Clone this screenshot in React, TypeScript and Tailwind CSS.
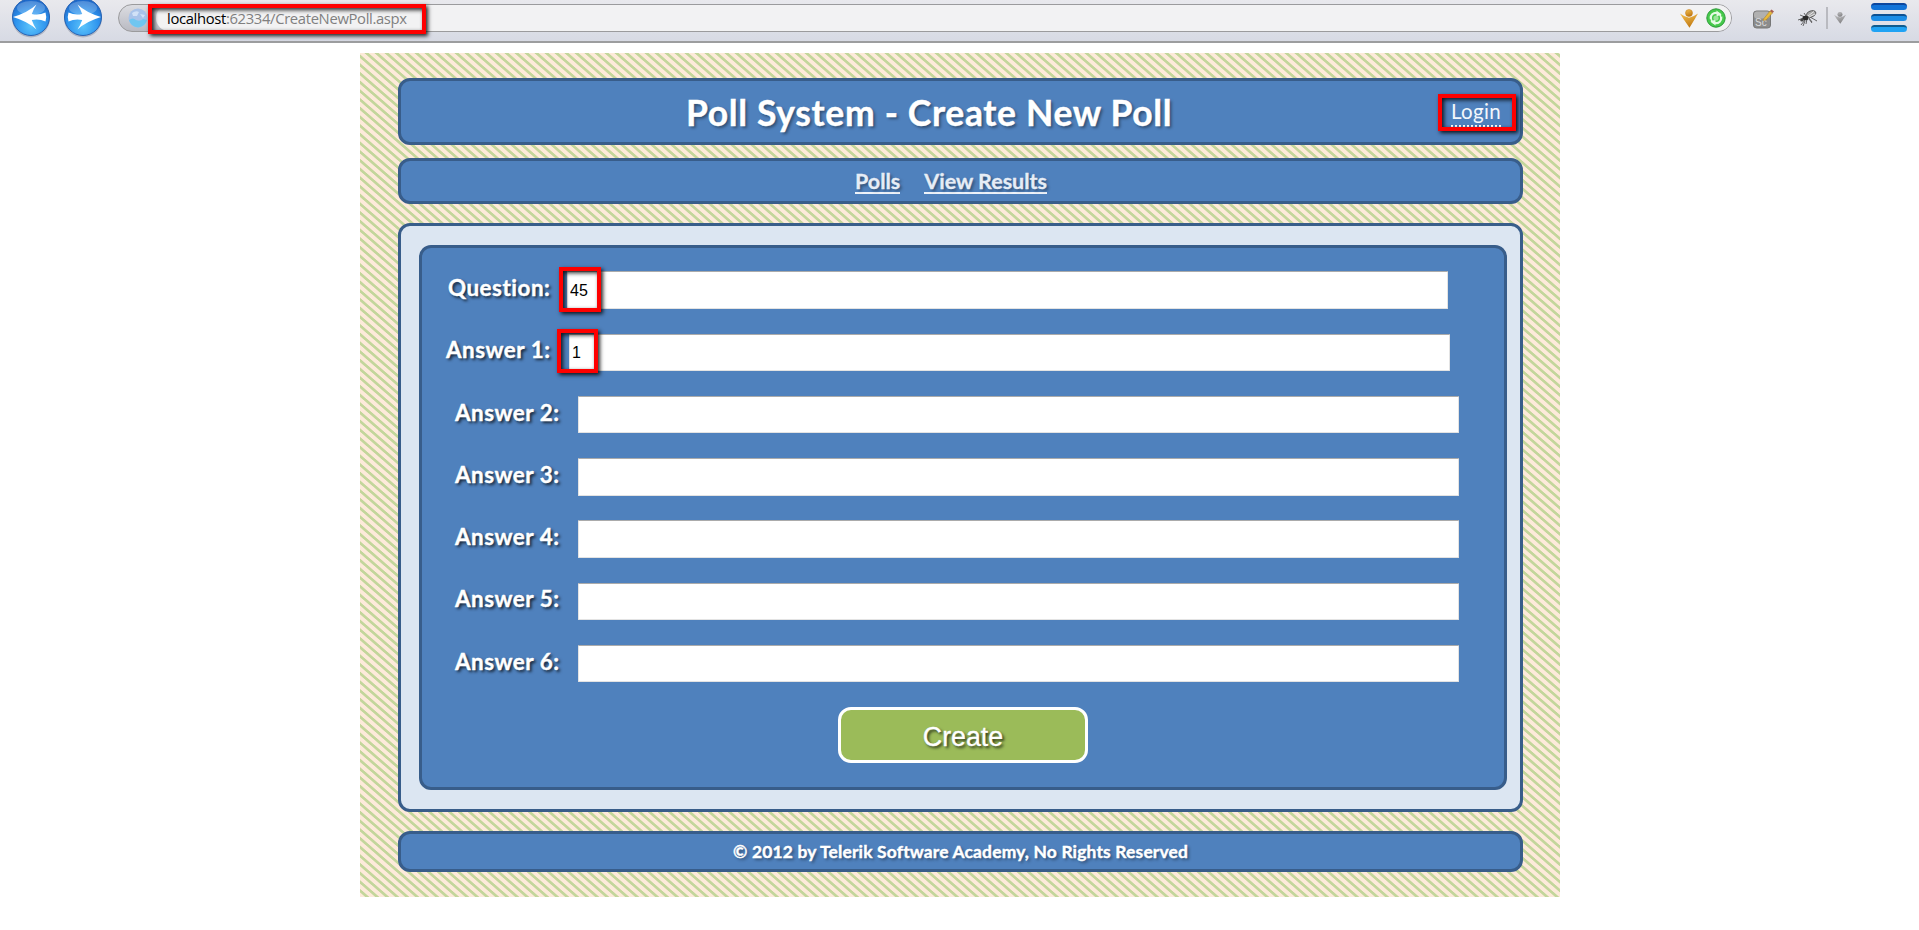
import React from "react";

const panel = "rounded-[12px] border-[3px] border-[#385d8a] bg-[#4f81bd]";
const heading = "font-['Lato',sans-serif] font-bold text-white whitespace-nowrap [-webkit-text-stroke:0.4px_currentColor]";

function Highlight({ className }: { className: string }) {
  return (
    <div
      className={`pointer-events-none absolute border-4 border-[#fe0000] shadow-[2px_2px_4px_rgba(0,0,0,0.85),inset_2px_2px_4px_rgba(0,0,0,0.85)] ${className}`}
    />
  );
}

function ArrowButton({ id, flip }: { id: string; flip?: boolean }) {
  return (
    <svg width="40" height="42" viewBox="0 0 40 42" className={flip ? "-scale-x-100" : ""}>
      <defs>
        <radialGradient id={id} cx="0.5" cy="0.75" r="0.75">
          <stop offset="0" stopColor="#5cc4fb" />
          <stop offset="0.55" stopColor="#2f95ee" />
          <stop offset="1" stopColor="#1b62c4" />
        </radialGradient>
      </defs>
      <circle cx="20" cy="18.5" r="19" fill="#8a93a5" opacity="0.55" />
      <circle cx="20" cy="17" r="18.5" fill={`url(#${id})`} stroke="#2663b4" />
      <ellipse cx="20" cy="8" rx="14" ry="7" fill="#fff" opacity="0.22" />
      <path d="M2 17 Q17 12.500 25.500 4.500 Q22.500 9 20.800 14 Q28 15.500 34.500 12.500 Q36 17 34.500 21.500 Q28 18.500 20.800 20 Q22.500 25 25.500 29.500 Q17 21.500 2 17Z" fill="#fff" />
    </svg>
  );
}

function Figure({ id, from, to, width, height }: { id: string; from: string; to: string; width: number; height: number }) {
  return (
    <svg width={width} height={height} viewBox="0 0 18 19" preserveAspectRatio="none">
      <defs>
        <linearGradient id={id} x1="0" y1="0" x2="0.4" y2="1">
          <stop offset="0" stopColor={from} />
          <stop offset="1" stopColor={to} />
        </linearGradient>
      </defs>
      <path d="M0 4.500 Q4.500 7.800 9 8.800 Q13.500 7.800 18 4.500 L14.500 10.500 L9.500 18.800 L3.800 10.500Z" fill={`url(#${id})`} />
      <circle cx="9" cy="4" r="3.500" fill={`url(#${id})`} stroke={to} strokeWidth="0.500" />
    </svg>
  );
}

function Toolbar() {
  return (
    <div className="relative flex h-[43px] items-start border-b-2 border-[#9c9d9f] bg-linear-to-b from-[#e9e9ed] to-[#d7dae4]">
      <div className="ml-[11px] flex gap-3">
        <ArrowButton id="back" />
        <ArrowButton id="forward" flip />
      </div>
      <div className="mt-1 ml-[15px] flex h-7 w-[1614px] items-center overflow-hidden rounded-full border border-[#9b9b9d] bg-linear-to-b from-[#dcdde2] to-[#b9bac2]">
        <svg width="20" height="20" viewBox="0 0 20 20" className="ml-[9px] shrink-0">
          <circle cx="10" cy="10" r="9.500" fill="#a9c3ea" />
          <path d="M1 12 Q5 9 8 12 Q12 14 15 11 L19 12 Q17 19 10 19.500 Q3 19 1 12Z" fill="#6fc6f0" />
          <path d="M4 5 Q8 2 11 4 L9 8 L5 8Z M12 6 L17 7 L15 10Z" fill="#dbe8fa" opacity="0.8" />
        </svg>
        <div className="ml-2 flex h-full flex-1 items-center rounded-l-[14px] bg-[#f2f2f3] pr-[5px] pl-[11px]">
          <span className="text-[14.800px] leading-5 whitespace-nowrap text-[#808080] font-['Open_Sans',sans-serif] tracking-[-0.340px]">
            <span className="text-black">localhost</span>:62334/CreateNewPoll.aspx
          </span>
          <div className="ml-auto flex items-center gap-[8px]">
            <Figure id="gold" from="#f7c453" to="#c17a14" width={18} height={19} />
            <svg width="20" height="20" viewBox="0 0 20 20">
              <circle cx="10" cy="10" r="9.200" fill="#46c94b" stroke="#2c9a38" strokeWidth="1" />
              <circle cx="10" cy="10" r="5.200" fill="none" stroke="#e6fbe4" strokeWidth="2.300" />
              <path d="M10.500 2.500 L15.500 6.500 L10.500 8.500Z M9.500 17.500 L4.500 13.500 L9.500 11.500Z" fill="#e6fbe4" />
              <path d="M15.500 8.500 L17 5.500 M4.500 11.500 L3 14.500" stroke="#46c94b" strokeWidth="1.400" />
              <circle cx="10" cy="10" r="2.600" fill="#9be59a" />
            </svg>
          </div>
        </div>
      </div>
      <svg width="22" height="20" viewBox="0 0 22 20" className="mt-[9px] ml-[20px]">
        <rect x="1.500" y="2" width="17" height="17" rx="3" fill="#8c8c8c" stroke="#777" />
        <rect x="2" y="2.500" width="16" height="7" rx="3" fill="#b0b0b0" />
        <text x="3" y="17" fontSize="10" fontFamily="Liberation Sans" fill="#dcdcdc">Sc</text>
        <path d="M11.500 10 L18 2 L20.500 4 L14 11 L11 11.500Z" fill="#e8b93c" stroke="#a37821" strokeWidth="0.500" />
        <path d="M18 2 L19.500 0.500 L22 2.500 L20.500 4Z" fill="#a85f4f" />
      </svg>
      <svg width="22" height="18" viewBox="0 0 22 18" className="mt-[9px] ml-[23px]">
        <path d="M3 6 L8 8 M1 11 L7 9 M4 16 L8 11 M9 15 L10 10 M7 4 L9 7 M15 13 L12 9 M20 12 L13 8 M8 12 L6 17 M15 14 L12 10" stroke="#444" strokeWidth="0.800" fill="none" />
        <ellipse cx="14" cy="5" rx="5" ry="3" fill="#a5a5a5" stroke="#444" strokeWidth="0.800" transform="rotate(-22 14 5)" />
        <ellipse cx="8.500" cy="9" rx="3" ry="2.300" fill="#2b2b2b" />
        <ellipse cx="5" cy="11" rx="1.800" ry="1.500" fill="#444" />
        <path d="M11 7 L17 2.500 M12 8 L18 5" stroke="#eee" strokeWidth="0.900" />
      </svg>
      <div className="mt-[7px] ml-[7px] h-[22px] w-[2px] bg-[#b9bac0]" />
      <div className="mt-[12px] ml-[6px]">
        <Figure id="silver" from="#c2c2c4" to="#858587" width={12} height={12} />
      </div>
      <div className="mt-[3px] ml-[25px] flex flex-col gap-1">
        <div className="h-[7px] w-9 rounded-full border-t-2 border-[#0b479f] bg-[#1173d8]" />
        <div className="h-[7px] w-9 rounded-full border-t-2 border-[#0d5192] bg-[#1c8de6]" />
        <div className="h-[7px] w-9 rounded-full border-t-2 border-[#0f5c8f] bg-[#20a3f4]" />
      </div>
      <Highlight className="top-1 left-[148px] h-[30px] w-[278px]" />
    </div>
  );
}

const rows = [
  { label: "Question:", value: "45", pad: "pl-[26px]", labelW: "w-[119px]", inputPad: "pl-[2px]" },
  { label: "Answer 1:", value: "1", pad: "pl-[24px]", labelW: "w-[123px]", inputPad: "pl-[2px]" },
  { label: "Answer 2:", value: "", pad: "pl-[33px]", labelW: "w-[123px]", inputPad: "" },
  { label: "Answer 3:", value: "", pad: "pl-[33px]", labelW: "w-[123px]", inputPad: "" },
  { label: "Answer 4:", value: "", pad: "pl-[33px]", labelW: "w-[123px]", inputPad: "" },
  { label: "Answer 5:", value: "", pad: "pl-[33px]", labelW: "w-[123px]", inputPad: "" },
  { label: "Answer 6:", value: "", pad: "pl-[33px]", labelW: "w-[123px]", inputPad: "" },
];

function PollForm() {
  return (
    <form className={`relative h-[545px] pt-[11px] ${panel}`} onSubmit={(e) => e.preventDefault()}>
      {rows.map((r) => (
        <div key={r.label} className={`flex h-[62.250px] items-center ${r.pad}`}>
          <label className={`shrink-0 pb-[4px] text-[22.400px] leading-7 tracking-[0.520px] text-shadow-[2px_2px_3px_rgba(0,0,0,0.75)] ${heading} ${r.labelW}`}>
            {r.label}
          </label>
          <input
            defaultValue={r.value}
            className={`h-[37.500px] w-[881px] rounded-[1px] border border-[#e3e3e3] border-t-[#ababab] bg-white pt-[2px] font-['Liberation_Sans',sans-serif] text-[16px] text-black outline-none ${r.inputPad}`}
          />
        </div>
      ))}
      <button className="mx-auto mt-[12px] flex h-14 w-[250px] items-center justify-center rounded-[13px] border-[3px] border-white bg-[#9bbb59] pt-[5px] font-['Liberation_Sans',sans-serif] text-[26.800px] text-white [-webkit-text-stroke:0.3px_currentColor] text-shadow-[2px_2px_3px_rgba(0,0,0,0.75)]">
        Create
      </button>
      <Highlight className="top-[19px] left-[137px] h-[45px] w-[42px]" />
      <Highlight className="top-[81px] left-[135px] h-[44px] w-[41px]" />
    </form>
  );
}

export default function App() {
  return (
    <div className="h-[930px] w-[1919px] overflow-hidden bg-white">
      <Toolbar />
      <div className="mt-[10px] ml-[360px] h-[844px] w-[1200px] bg-[repeating-linear-gradient(41deg,#fdeada_0px,#fdeada_3.100px,#c3d69b_3.900px,#c3d69b_5.800px,#fdeada_6.560px)] pt-[25px] pl-[38px]">
        <header className={`relative flex h-[67px] w-[1125px] items-center ${panel}`}>
          <h1 className={`ml-[285px] pt-[2px] text-[35.500px] leading-[44px] tracking-[0.660px] text-shadow-[2px_2px_3px_rgba(0,0,0,0.4)] ${heading}`}>
            Poll System - Create New Poll
          </h1>
          <a className="absolute top-[17px] left-[1050px] h-[29px] w-[50px] border-b-2 border-dotted border-white font-['Lato',sans-serif] text-[20.500px] leading-[26px] tracking-[0.300px] text-[#f3f7fc]">
            Login
          </a>
          <Highlight className="top-[13px] left-[1037px] h-[37px] w-[78px]" />
        </header>
        <nav className={`mt-[13px] flex h-[46px] w-[1125px] items-center gap-6 pt-[1px] pl-[454px] ${panel}`}>
          {["Polls", "View Results"].map((t) => (
            <a key={t} className="border-b-2 border-[#eef3fa] font-['Lato',sans-serif] text-[21.500px] leading-[22px] font-bold whitespace-nowrap text-[#e6edf6] text-shadow-[2px_2px_3px_rgba(0,0,0,0.4)] [-webkit-text-stroke:0.3px_currentColor]">
              {t}
            </a>
          ))}
        </nav>
        <main className="mt-[19px] h-[589px] w-[1125px] rounded-[12px] border-[3px] border-[#385d8a] bg-[#dce6f2] pt-[19px] pr-[13px] pl-[18px]">
          <PollForm />
        </main>
        <footer className={`mt-[19px] flex h-[41px] w-[1125px] items-center pt-[2px] pl-[332px] text-[17.400px] tracking-[0.180px] text-shadow-[2px_2px_3px_rgba(0,0,0,0.4)] ${panel} ${heading}`}>
          © 2012 by Telerik Software Academy, No Rights Reserved
        </footer>
      </div>
    </div>
  );
}
